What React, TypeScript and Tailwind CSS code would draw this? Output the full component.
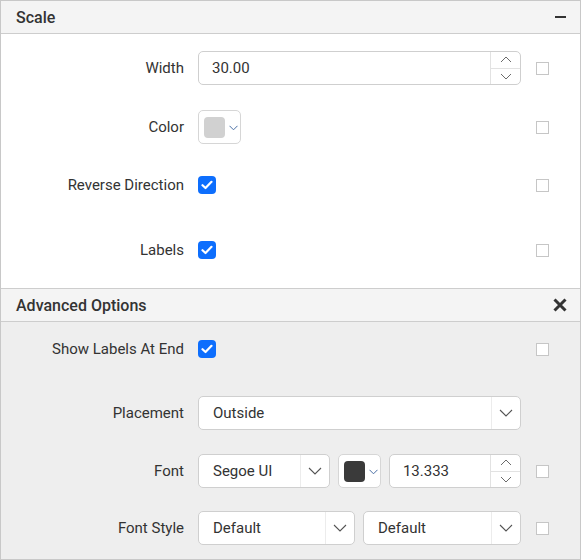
import React from "react";

const font = { fontFamily: "Roboto, 'Liberation Sans', sans-serif" };

function Chevron({ up = false }: { up?: boolean }) {
	return (
		<svg width="12" height="7" viewBox="0 0 12 7" fill="none">
			<path
				d={up ? "M1 6L6 1L11 6" : "M1 1L6 6L11 1"}
				stroke="#6b6b6b"
				strokeWidth="1"
			/>
		</svg>
	);
}

function SmallChevron() {
	return (
		<svg width="9" height="6" viewBox="0 0 9 6" fill="none">
			<path d="M0.5 0.8L4.5 4.8L8.5 0.8" stroke="#4a6fa5" strokeWidth="1" />
		</svg>
	);
}

function Check() {
	return (
		<div className="flex items-center justify-center w-[18px] h-[18px] rounded-[4px] bg-[#0d6efd]">
			<svg width="12" height="10" viewBox="0 0 12 10" fill="none">
				<path
					d="M1.5 5.2L4.5 8L10.5 1.8"
					stroke="white"
					strokeWidth="2.2"
					strokeLinecap="round"
					strokeLinejoin="round"
				/>
			</svg>
		</div>
	);
}

function Box() {
	return <div className="w-[13px] h-[13px] border border-[#c6c6c6] bg-white" />;
}

function Spin({ value, width }: { value: string; width: string }) {
	return (
		<div
			className={`flex h-[34px] ${width} bg-white border border-[#cfcfcf] rounded-[5px] overflow-hidden`}
		>
			<div className="flex-1 flex items-center pl-[13px] text-[15px] text-[#333]">
				{value}
			</div>
			<div className="w-[30px] flex flex-col border-l border-[#e2e2e2]">
				<div className="flex-1 flex items-center justify-center border-b border-[#e2e2e2]">
					<Chevron up />
				</div>
				<div className="flex-1 flex items-center justify-center">
					<Chevron />
				</div>
			</div>
		</div>
	);
}

function Select({ value, width }: { value: string; width: string }) {
	return (
		<div
			className={`flex h-[34px] ${width} bg-white border border-[#cfcfcf] rounded-[5px] overflow-hidden`}
		>
			<div className="flex-1 flex items-center pl-[14px] text-[15px] text-[#333]">
				{value}
			</div>
			<div className="w-[29px] flex items-center justify-center border-l border-[#ececec]">
				<svg width="14" height="8" viewBox="0 0 14 8" fill="none">
					<path d="M1 1L7 7L13 1" stroke="#555" strokeWidth="1.1" />
				</svg>
			</div>
		</div>
	);
}

function ColorPick({ color }: { color: string }) {
	return (
		<div className="flex items-center h-[34px] w-[43px] bg-white border border-[#d6d6d6] rounded-[5px] pl-[5px]">
			<div
				className="w-[21px] h-[21px] rounded-[4px]"
				style={{ backgroundColor: color }}
			/>
			<div className="ml-[4px] mt-[1px]">
				<SmallChevron />
			</div>
		</div>
	);
}

function Row({
	label,
	children,
	box = true,
	className = "",
}: {
	label: string;
	children: React.ReactNode;
	box?: boolean;
	className?: string;
}) {
	return (
		<div className={`flex items-center h-[34px] ${className}`}>
			<div className="w-[183px] text-right text-[15px] text-[#333] whitespace-nowrap">
				{label}
			</div>
			<div className="w-[323px] ml-[14px] flex items-center gap-[8px]">
				{children}
			</div>
			<div className="ml-[15px] w-[13px]">{box && <Box />}</div>
		</div>
	);
}

export default function App() {
	return (
		<div
			className="w-[581px] h-[560px] border border-[#c8c8c8] bg-white flex flex-col"
			style={font}
		>
			<div className="h-[33px] flex items-center justify-between bg-[#f4f4f4] border-b border-[#cdcdcd] px-[15px]">
				<span className="text-[16px] font-medium text-[#333] mt-[2px]">
					Scale
				</span>
				<div className="w-[11px] h-[2px] bg-[#333] mr-[-1px]" />
			</div>
			<div className="pt-[17px] pb-[21px] bg-white">
				<Row label="Width">
					<Spin value="30.00" width="w-[323px]" />
				</Row>
				<Row label="Color" className="mt-[25px]">
					<ColorPick color="#d1d1d1" />
				</Row>
				<Row label="Reverse Direction" className="mt-[24px]">
					<Check />
				</Row>
				<Row label="Labels" className="mt-[31px]">
					<Check />
				</Row>
			</div>
			<div className="h-[34px] flex items-center justify-between bg-[#f4f4f4] border-y border-[#cdcdcd] px-[15px]">
				<span className="text-[16px] font-medium text-[#333] mt-[1px]">
					Advanced Options
				</span>
				<svg width="14" height="14" viewBox="0 0 14 14" className="mr-[-2px]">
					<path
						d="M1.5 1.5L12.5 12.5M12.5 1.5L1.5 12.5"
						stroke="#333"
						strokeWidth="3"
					/>
				</svg>
			</div>
			<div className="flex-1 bg-[#eeeeee] pt-[10px]">
				<Row label="Show Labels At End">
					<Check />
				</Row>
				<Row label="Placement" box={false} className="mt-[30px]">
					<Select value="Outside" width="w-[324px]" />
				</Row>
				<Row label="Font" className="mt-[24px]">
					<Select value="Segoe UI" width="w-[133px]" />
					<ColorPick color="#3a3a3a" />
					<Spin value="13.333" width="w-[133px]" />
				</Row>
				<Row label="Font Style" className="mt-[23px]">
					<Select value="Default" width="w-[157px]" />
					<Select value="Default" width="w-[158px]" />
				</Row>
			</div>
		</div>
	);
}
